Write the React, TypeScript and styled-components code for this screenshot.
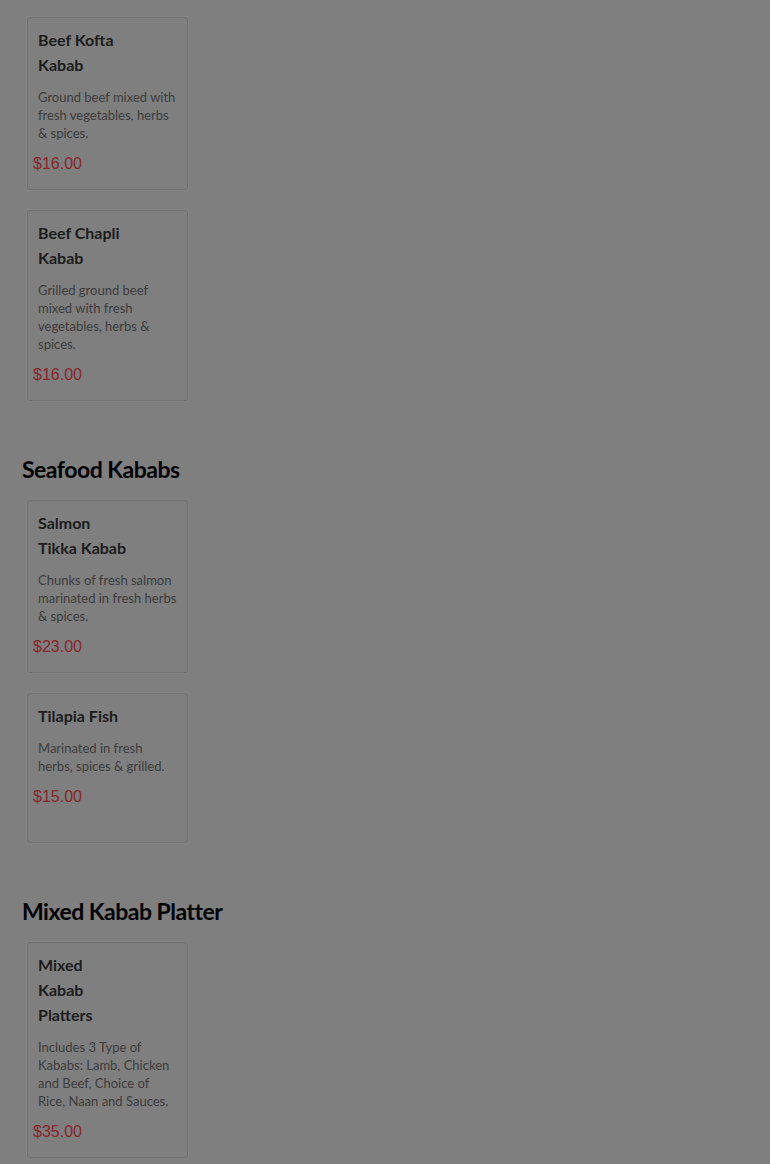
import React from "react";
import styled, { createGlobalStyle } from "styled-components";

const Global = createGlobalStyle`
  html, body { margin: 0; padding: 0; background: #7f7f7f; }
  body { font-family: Lato, "Liberation Sans", sans-serif; }
`;

const Page = styled.div`
  padding: 17px 0 0 22px;
  display: flex;
  flex-direction: column;
`;

const Section = styled.section`
  display: flex;
  flex-direction: column;
  & + & { margin-top: 54px; }
`;

const Heading = styled.h2`
  margin: 0 0 17px 0;
  font-family: Lato, sans-serif;
  font-weight: 700;
  font-size: 23px;
  line-height: 28px;
  color: #000;
  letter-spacing: -0.5px;
`;

const CardList = styled.div`
  display: flex;
  flex-direction: column;
  gap: 20px;
  margin-left: 5px;
`;

const Card = styled.article`
  box-sizing: border-box;
  width: 161px;
  min-height: 150px;
  padding: 9px 10px 15px 10px;
  border: 1px solid #727272;
  border-radius: 3px;
  box-shadow: 0 0 0 1px rgba(255, 255, 255, 0.04);
  display: flex;
  flex-direction: column;
`;

const Title = styled.h3`
  margin: 0 0 11px 0;
  font-family: Lato, sans-serif;
  font-weight: 700;
  font-size: 16px;
  line-height: 25px;
  color: #1c1c1c;
  white-space: pre-line;
`;

const Desc = styled.p`
  margin: 0 0 12px 0;
  font-family: Lato, sans-serif;
  font-weight: 400;
  font-size: 13px;
  line-height: 18px;
  color: #3c3c3c;
  white-space: pre-line;
`;

const Price = styled.div`
  margin-left: -5px;
  font-family: "Liberation Sans", Arial, sans-serif;
  font-size: 16px;
  line-height: 20px;
  color: #87252b;
`;

type Item = { title: string; desc: string; price: string };
type Group = { heading?: string; items: Item[] };

const groups: Group[] = [
  {
    items: [
      {
        title: "Beef Kofta\nKabab",
        desc: "Ground beef mixed with\nfresh vegetables, herbs\n& spices.",
        price: "$16.00",
      },
      {
        title: "Beef Chapli\nKabab",
        desc: "Grilled ground beef\nmixed with fresh\nvegetables, herbs &\nspices.",
        price: "$16.00",
      },
    ],
  },
  {
    heading: "Seafood Kababs",
    items: [
      {
        title: "Salmon\nTikka Kabab",
        desc: "Chunks of fresh salmon\nmarinated in fresh herbs\n& spices.",
        price: "$23.00",
      },
      {
        title: "Tilapia Fish",
        desc: "Marinated in fresh\nherbs, spices & grilled.",
        price: "$15.00",
      },
    ],
  },
  {
    heading: "Mixed Kabab Platter",
    items: [
      {
        title: "Mixed\nKabab\nPlatters",
        desc: "Includes 3 Type of\nKababs: Lamb, Chicken\nand Beef, Choice of\nRice, Naan and Sauces.",
        price: "$35.00",
      },
    ],
  },
];

export default function App() {
  return (
    <>
      <Global />
      <Page>
        {groups.map((g, gi) => (
          <Section key={gi}>
            {g.heading && <Heading>{g.heading}</Heading>}
            <CardList>
              {g.items.map((it) => (
                <Card key={it.title}>
                  <Title>{it.title}</Title>
                  <Desc>{it.desc}</Desc>
                  <Price>{it.price}</Price>
                </Card>
              ))}
            </CardList>
          </Section>
        ))}
      </Page>
    </>
  );
}
